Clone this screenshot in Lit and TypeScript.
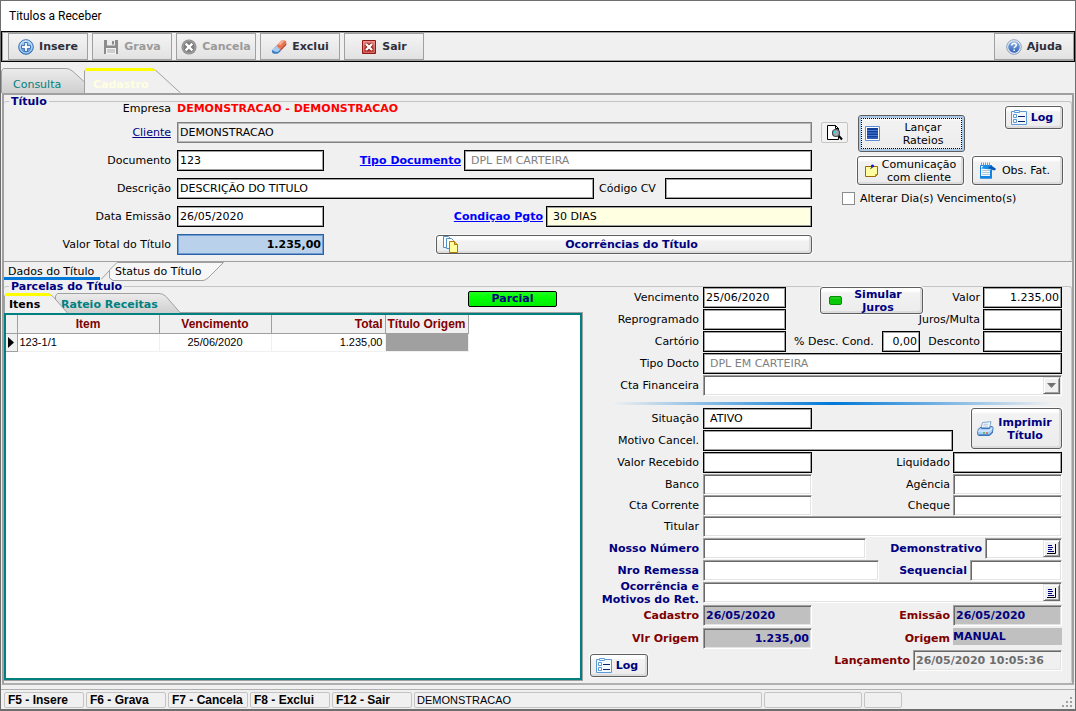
import { LitElement, html, css, svg, nothing, type TemplateResult } from "lit";
import { customElement } from "lit/decorators.js";

const icons: Record<string, TemplateResult> = {
  add: html`<svg width="16" height="16" viewBox="0 0 16 16">
    <defs><linearGradient id="ga" x2="0" y2="1"><stop stop-color="#b9dcf8" /><stop offset="1" stop-color="#3f83cf" /></linearGradient></defs>
    <circle cx="8" cy="8" r="7.3" fill="url(#ga)" stroke="#3c6eb0" /><circle cx="8" cy="8" r="6" fill="none" stroke="#d4eafc" stroke-width=".8" />
    <path d="M6.6 3.5h2.8v3.1h3.1v2.8H9.4v3.1H6.6V9.400H3.500V6.600H6.600z" fill="#fff" stroke="#2d66ae" stroke-width=".9" /></svg>`,
  save: html`<svg width="16" height="16" viewBox="0 0 16 16">
    <path d="M1 1h14v14H1z" fill="#8c8c8c" /><path d="M4 1h8v5.500H4z" fill="#ededed" /><path d="M9 2h2v3.500H9z" fill="#8c8c8c" />
    <path d="M3 9h10v6H3z" fill="#f4f4f4" /><path d="M4 11h8M4 13h8" stroke="#a8a8a8" /></svg>`,
  cancel: html`<svg width="16" height="16" viewBox="0 0 16 16">
    <circle cx="8" cy="8" r="7.500" fill="#858585" /><circle cx="8" cy="8" r="6.300" fill="none" stroke="#a9a9a9" />
    <path d="M4.700 4.700l6.600 6.600M11.300 4.700l-6.600 6.600" stroke="#6c6c6c" stroke-width="4" /><path d="M4.700 4.700l6.600 6.600M11.300 4.700l-6.600 6.600" stroke="#fff" stroke-width="2.400" /></svg>`,
  eraser: html`<svg width="16" height="16" viewBox="0 0 16 16">
    <path d="M10.500 1.500h3.200q2 .3 1.600 2.500L9 10.500 5.500 6.500z" fill="#e8734d" /><path d="M10.500 1.500h3.200L9.500 6.300 6.800 5.300z" fill="#f6b095" />
    <path d="M15.300 4v2L9.500 12l-.5-1.500z" fill="#b5432c" /><path d="M5 7l4.500 4v1.500l-3 2.300H3q-2.800-.6-1.800-3.500z" fill="#3d7dc4" /><path d="M5 7l4.300 3.500-2.600 2.500q-3.600 0-5.300-2z" fill="#a9cbee" /></svg>`,
  exit: html`<svg width="16" height="16" viewBox="0 0 16 16">
    <defs><linearGradient id="ge" x2="0" y2="1"><stop stop-color="#e58a84" /><stop offset="1" stop-color="#b3201c" /></linearGradient></defs>
    <path d="M1.500 1.500h13v13h-13z" fill="url(#ge)" stroke="#8f1814" /><path d="M2.700 2.700h10.600v10.600H2.700z" fill="none" stroke="#e9a19c" stroke-width=".7" />
    <path d="M5 5l6 6M11 5l-6 6" stroke="#8f1814" stroke-width="4" /><path d="M5 5l6 6M11 5l-6 6" stroke="#fff" stroke-width="2.400" /></svg>`,
  help: html`<svg width="16" height="16" viewBox="0 0 16 16">
    <defs><linearGradient id="gh" x2="0" y2="1"><stop stop-color="#8fb1e6" /><stop offset="1" stop-color="#2f62b8" /></linearGradient></defs>
    <circle cx="8" cy="8" r="7.300" fill="#e8eef8" stroke="#8d9dbb" /><circle cx="8" cy="8" r="5.800" fill="url(#gh)" />
    <path d="M5.800 6.500q0-2.300 2.300-2.300 2.200.1 2.200 1.900 0 1-1.200 1.700-.9.500-.9 1.500" fill="none" stroke="#fff" stroke-width="1.500" /><path d="M7.400 10.600h1.600V12H7.400z" fill="#fff" /></svg>`,
  log: html`<svg width="16" height="15" viewBox="0 0 16 15">
    <path d="M.5 14.500V1.500h3V.5h5v1h7v13z" fill="#f4f9ff" stroke="#5c9ad6" /><path d="M3.500 1.500v1h5v-1" fill="none" stroke="#5c9ad6" />
    <path d="M2.500 4.500h3v3h-3zM2.500 9.500h3v3h-3z" fill="#fff" stroke="#5c9ad6" /><path d="M7 6.500h7M7 11.500h7" stroke="#0a246a" /></svg>`,
  grid: html`<svg width="15" height="15" viewBox="0 0 15 15">
    <path d="M.5.500h14v14H.5z" fill="#fff" stroke="#5c8fd6" /><path d="M2 2h11v11H2z" fill="#123f9a" />
    <path d="M2 4.500h11M2 7h11M2 9.500h11M2 12h11" stroke="#4f86dc" stroke-width=".9" /></svg>`,
  note: html`<svg width="13" height="13" viewBox="0 0 13 13">
    <path d="M.5 2.500h12v8l-2 2H.500z" fill="#ffffa0" stroke="#9a6a00" /><path d="M12.500 10.500h-2v2z" fill="#d9a520" stroke="#9a6a00" stroke-width=".6" />
    <path d="M5.500 5L7.500 2.500" stroke="#333" /><circle cx="7.500" cy="2" r="1.600" fill="#1818d8" /></svg>`,
  pad: html`<svg width="17" height="17" viewBox="0 0 17 17">
    <path d="M1.500 3.500h11v12.500H1.500z" fill="#f6f9fc" stroke="#1184e4" /><path d="M3 8.500h8M3 10.500h8M3 12.500h8" stroke="#b4c6d8" />
    <path d="M1 14h12v2.500H1zM11 8h2v8h-2z" fill="#1184e4" />
    <path d="M2.500.5v3M4.500.5v3M6.500.5v3M8.500.5v3M10.500.5v3" stroke="#888" stroke-width=".9" />
    <path d="M2 6.500L5 3.500h7l5 3.500-2 1.500-3-1z" fill="#1b8ce8" /><path d="M12 3.500L17 7l-1.500 1.200L9 6z" fill="#0b57b4" /></svg>`,
  pages: html`<svg width="15" height="17" viewBox="0 0 15 17">
    <path d="M.5.500h5l2 2v9h-7z" fill="#fff" stroke="#4f8fc8" /><path d="M3.500 2.500h5l2 2v8h-7z" fill="#fff" stroke="#4f8fc8" />
    <path d="M6.500 5.500h5l3 3v8h-8z" fill="#ffff9c" stroke="#b07808" /><path d="M11.500 5.500v3h3" fill="#e8c040" stroke="#b07808" /></svg>`,
  search: html`<svg width="17" height="17" viewBox="0 0 17 17">
    <path d="M1.500 1.500h8l3 3v11h-11z" fill="#fff" stroke="#000" /><path d="M9.500 1.500v3h3" fill="none" stroke="#000" />
    <path d="M12 11l4 4.500" stroke="#000" stroke-width="2" /><circle cx="10" cy="9" r="3.500" fill="#9aa" stroke="#445" stroke-width="1.200" /><circle cx="9" cy="8" r="1.200" fill="#2fe0e0" /></svg>`,
  green: html`<svg width="13" height="11" viewBox="0 0 13 11">
    <rect x=".5" y="1.500" width="12" height="8" rx="1.500" fill="#08c808" stroke="#0a8a0a" /><path d="M2 3h9" stroke="#3fdf3f" stroke-width=".8" /></svg>`,
  print: html`<svg width="17" height="16" viewBox="0 0 17 16">
    <path d="M5.500 1.500l8.500-.8-1.500 6H4z" fill="#fff" stroke="#7da3cf" /><path d="M6.500 3.200h5M6 5h5" stroke="#8db2dc" stroke-width=".8" />
    <path d="M3 6.500h1.500v1h8l.8-2h1.700q1.200.3 1 1.500l-.6 5-3 2.500H1.500Q.500 14 .7 12L1.200 8.500z" fill="#a9d0f5" stroke="#3d74b4" />
    <path d="M1 10h11l3.500-3" fill="none" stroke="#eaf5ff" /><path d="M1.500 13.800h10.500l3-2.500" fill="none" stroke="#3f78bd" /><path d="M6 12h2" stroke="#1a1" stroke-width="1.200" /><path d="M9 12h2" stroke="#e22" stroke-width="1.200" /></svg>`,
  memo: html`<svg width="9" height="10" viewBox="0 0 9 10">
    <path d="M0 9.500h8.500V0" fill="none" stroke="#000" /><path d="M1 1.500h4M1 3.500h5M1 5.500h4M1 7.500h6" stroke="#000080" /></svg>`,
  arrow: html`<svg width="9" height="5" viewBox="0 0 9 5"><path d="M0 0h9L4.500 5z" fill="#707070" /></svg>`,
};

/** Outline and fill of a slanted page tab. */
const tabShape = (w: number, h: number, slant: number, fill: string, cap: boolean, flip = false) => html`
  <svg class="shape" width=${w} height=${h} viewBox="0 0 ${w} ${h}">
    <defs><linearGradient id="tg" x2="0" y2="1"><stop stop-color="#ececec" /><stop offset="1" stop-color="#cfcfcf" /></linearGradient></defs>
    ${flip
      ? svg`<path d="M.5 ${h - 3}V8L8 .5H${w - 0.5}L${w - slant + 2} ${h - 3}q-3 2.500-5 2.500H4z" fill=${fill} stroke="#a0a0a0" />`
      : svg`<path d="M.5 ${h}V3l2-2.500H${w - slant - 6}q4 0 7 3L${w - 0.5} ${h}" fill=${fill} stroke="#a0a0a0" />`}
    ${cap ? svg`<path d="M1 0H${w - slant - 5}q3 0 5 3H1z" fill="#ff0" />` : nothing}
  </svg>`;

const field = (id: string, cls: string, value = "", label?: string) =>
  html`<input id=${id} class="in ${cls}" type="text" .value=${value} aria-label=${label ?? nothing} />`;

const pair = (label: string, id: string, cls: string, value = "", labelCls = "") =>
  html`<label class=${labelCls} for=${id}>${label}</label>${field(id, cls, value)}`;

@customElement("app-root")
export class AppRoot extends LitElement {
  static styles = css`
    :host {
      display: block;
      font: 11px/13px "DejaVu Sans", Verdana, sans-serif;
      color: #000;
    }
    * { box-sizing: border-box; }
    button, input, select { font: inherit; color: inherit; margin: 0; min-width: 0; }
    label, a, button, legend { white-space: nowrap; }
    svg { flex: none; display: block; }
    .window {
      display: flex; flex-direction: column; min-height: 100vh;
      background: #f0f0f0; border: 1px solid #6e6e6e; border-bottom: 2px solid #6e6e6e;
    }
    .title {
      margin: 0; padding: 0 8px; background: #fff;
      font: 12px/30px Roboto, "Open Sans", sans-serif;
    }
    .toolbar {
      display: flex; gap: 4px; height: 31px; padding: 1px 0 1px 6px;
      border: 1px solid #000; box-shadow: inset 0 0 0 1px #a0a0a0;
    }
    .tool {
      display: flex; align-items: center; justify-content: center; gap: 5px;
      width: 80px; padding: 0; border: 1px solid #a0a0a0;
      background: linear-gradient(#f4f4f4, #e2e2e2); color: #2f2f3a; font-weight: bold;
    }
    .tool:disabled { color: #9a9a9a; }
    .tool.end { margin-left: auto; }

    .tabs { display: flex; }
    .tab {
      position: relative; z-index: 0; padding: 0; border: 0; background: none; text-align: left;
    }
    .shape { position: absolute; left: 0; top: 0; z-index: -1; }
    .main-tabs { padding-top: 6px; }
    .main-tabs .tab { height: 25px; padding: 8px 0 0 12px; color: #008080; }
    .main-tabs .first { width: 83px; }
    .main-tabs .second { width: 97px; padding-left: 9px; color: #ffffe1; font-weight: bold; }

    .page {
      display: flex; flex-direction: column; flex: 1; margin: 0 1px 4px;
      border: 2px solid #a0a0a0; border-bottom-color: #b0b0b0;
    }
    fieldset {
      min-width: 0; margin: 0; padding: 0; border: 1px solid #c4c4c4;
      border-width: 1px 1px 0 0; border-radius: 3px;
    }
    legend { margin-left: 5px; padding: 0 2px; color: #000080; font-weight: bold; line-height: 13px; }

    .header { display: flex; margin-top: -7px; padding-bottom: 6px; }
    .rows { display: flex; flex-direction: column; flex: 1; gap: 7px; }
    .row { display: flex; align-items: center; height: 21px; }
    .row.text { height: 14px; }
    .cap { width: 167px; margin-right: 6px; text-align: right; }
    .company { color: #f00; font-weight: bold; }
    a { color: #00f; font-weight: bold; }
    a.plain { color: #000080; font-weight: normal; }
    .spread { justify-content: space-between; }
    .start { display: flex; align-items: center; }
    .code { width: 61px; margin: 0 5px; }
    .cond { display: flex; align-items: center; gap: 3px; }

    .in { height: 21px; padding: 0 2px; border: 1px solid #000; border-radius: 0; background: #fff; outline: none; }
    .flat { box-shadow: inset 0 0 0 1px #a0a0a0; }
    .sunk, .combo {
      border-color: #a0a0a0 #fff #fff #a0a0a0; box-shadow: inset 1px 1px #696969, inset -1px -1px #e3e3e3;
    }
    .grow { flex: 1; }
    .read { background: #f0f0f0; border-color: #808080; box-shadow: inset 0 0 0 1px #b8b8b8; }
    .muted { color: #808080; padding-left: 6px; }
    .pad { padding-left: 6px; }
    .num { text-align: right; }
    .yellow { background: #ffffe1; padding-left: 6px; }
    .total { background: #b9d1ea; border-color: #2a62a8; box-shadow: inset 0 0 0 1px #6f9bd0; font-weight: bold; }
    .w147 { width: 147px; } .w266 { width: 266px; } .w348 { width: 348px; } .w376 { width: 376px; }
    .w83 { width: 83px; } .w79 { width: 79px; } .w38 { width: 38px; } .w109 { width: 109px; }
    .w163 { width: 163px; } .w176 { width: 176px; } .w92 { width: 92px; } .w77 { width: 77px; } .w149 { width: 149px; }
    .gray { background: #c0c0c0; color: #000080; font-weight: bold; }
    .none { border: 0; height: 17px; padding: 0; }
    .off { background: #f0f0f0; color: #6d6d6d; font-weight: bold; }

    .btn {
      display: flex; align-items: center; padding: 0 6px; border: 1px solid #5e5e5e; border-radius: 3px;
      background: linear-gradient(#fff 0, #fff 3px, #f2f2f2 5px, #ececec);
      box-shadow: inset -2px -2px #dcdcdc, 0 0 0 1px #fafafa;
    }
    .btn span { flex: 1; text-align: center; white-space: normal; }
    .navy { color: #000080; font-weight: bold; }
    .log { width: 58px; height: 23px; padding: 0 5px; }

    .aside { width: 259px; padding: 5px 8px 0 9px; }
    .aside-top { display: flex; align-items: flex-start; height: 50px; }
    .find {
      display: flex; align-items: center; justify-content: center; width: 27px; height: 21px; margin: 16px 10px 0 0;
      padding: 0; border: 1px solid #c4c4c4; border-radius: 2px; background: #f2f2f2;
    }
    .launch { width: 107px; height: 37px; margin-top: 9px; outline: 1px dotted #000; outline-offset: -4px; box-shadow: inset 0 0 0 2px #a9cbe9; }
    .launch span { padding-left: 8px; }
    .aside .log { margin-left: auto; }
    .aside-mid { display: flex; justify-content: flex-end; gap: 8px; }
    .aside-mid .btn { height: 29px; }
    .comm { width: 107px; padding: 0 3px 0 7px; }
    .obs { width: 91px; }
    .check { display: flex; align-items: center; gap: 5px; margin: 6px 0 0 21px; height: 14px; }
    .check input { appearance: none; width: 13px; height: 13px; border: 1px solid #8c8c8c; background: #fff; }

    .sub-tabs { height: 19px; border-top: 1px solid #a0a0a0; }
    .sub-tabs .tab { height: 18px; padding-left: 4px; }
    .sub-tabs .on { width: 105px; background: linear-gradient(#0078d7, #0078d7) 0 100% / 96px 3px no-repeat; }
    .sub-tabs .on .slant { position: absolute; right: 0; bottom: 0; }
    .sub-tabs .other { width: 115px; padding-left: 6px; }

    .installments { display: flex; flex-direction: column; flex: 1; }
    .body { display: flex; flex: 1; margin-top: -7px; min-height: 397px; }
    .left { display: flex; flex-direction: column; flex: 1; padding: 5px 0 3px; }
    .left-head { display: flex; justify-content: space-between; align-items: flex-start; padding-right: 26px; height: 22px; }
    .list-tabs { padding-top: 2px; }
    .list-tabs .tab { height: 20px; padding: 3px 0 0 5px; font-weight: bold; }
    .list-tabs .on { width: 51px; z-index: 1; }
    .list-tabs .other { width: 126px; padding-left: 6px; color: #008080; }
    .status {
      width: 89px; height: 16px; padding: 0; border: 1px solid #000; border-radius: 2px;
      background: linear-gradient(#2f2, #0f0 40%, #0e0); color: #000080; font-weight: bold; line-height: 14px;
    }
    .box { flex: 1; border: 2px solid #008080; outline: 1px solid #a0a0a0; outline-offset: 0; background: #fff; margin-right: 1px; }
    table { border-collapse: collapse; table-layout: fixed; width: 462px; font: 12px/15px "Liberation Sans", Arial, sans-serif; }
    th { height: 18px; padding: 1px 2px 0; background: #f0f0f0; border: 1px solid #a0a0a0; border-width: 0 1px 1px 0; color: #800000; white-space: nowrap; }
    td { height: 18px; padding: 0 2px; border: 1px solid #f0f0f0; border-width: 0 1px 1px 0; font-size: 11px; }
    .ind { background: #f0f0f0; border-color: #a0a0a0; padding: 0 0 0 2px; }
    .c { text-align: center; } .r { text-align: right; }
    .fill { background: #a0a0a0; }

    .form { width: 488px; padding: 1px 9px 0 3px; }
    .group { display: flex; flex-direction: column; gap: 1px; }
    .tight { gap: 0; margin: 1px 0; }
    .loose { gap: 2px; margin-top: 2px; }
    .form .cap { width: 113px; margin-right: 4px; }
    .form .row { align-items: flex-start; }
    .form label { line-height: 21px; }
    .form .two { line-height: 13px; margin-top: -2px; }
    .right { display: flex; margin-left: auto; gap: 3px; }
    .maroon { color: #800000; font-weight: bold; }
    .simulate { width: 103px; height: 27px; margin-left: auto; padding: 0 8px; }
    .value { display: flex; gap: 3px; width: 139px; justify-content: flex-end; }
    .disc { display: flex; gap: 4px; margin-left: 8px; }
    .disc label { width: 84px; }
    .combo { position: relative; display: flex; flex: 1; height: 21px; border-style: solid; border-width: 1px; background: #fff; }
    .right .combo { flex: none; }
    .combo select, .combo input { flex: 1; width: 100%; border: 0; background: none; appearance: none; padding: 0 3px; outline: none; }
    .drop {
      display: flex; align-items: center; justify-content: center; flex: none; width: 17px; padding: 0;
      border: 1px solid; border-color: #e3e3e3 #696969 #696969 #e3e3e3; background: #f0f0f0; box-shadow: inset 1px 1px #fff, inset -1px -1px #a0a0a0;
      pointer-events: none; margin: 1px;
    }
    .rule { height: 3px; margin: 6px 10px 3px 26px; border: 0; background: linear-gradient(90deg, #f0f0f0, #0078d7 50%, #f0f0f0); }
    .split { display: flex; gap: 18px; }
    .split .group { flex: 1; }
    .print { width: 91px; height: 41px; padding: 0 5px; }
    .foot { display: flex; align-items: flex-start; margin-top: -1px; }
    .foot .log { margin: 4px 0 0 4px; }

    .statusbar { display: flex; gap: 2px; height: 20px; padding: 2px 2px 1px 3px; border-top: 1px solid #b0b0b0; font: bold 12px/15px "Liberation Sans", Arial, sans-serif; }
    .cell { width: 80px; padding: 0 3px; border: 1px solid #c4c4c4; border-radius: 2px; white-space: nowrap; }
    .cell.user { flex: 1; padding: 0 2px; font-size: 11px; font-weight: normal; }
    .cell.b { width: 98px; } .cell.s { width: 38px; }
    .grip { width: 169px; display: flex; justify-content: flex-end; align-items: flex-end; }
  `;

  private tool(icon: string, text: string, cls = "", disabled = false) {
    return html`<button class="tool ${cls}" ?disabled=${disabled}>${icons[icon]}${text}</button>`;
  }

  private renderHeader() {
    return html`<fieldset>
      <legend>Título</legend>
      <div class="header">
        <div class="rows">
          <div class="row text"><span class="cap">Empresa</span><span class="company">DEMONSTRACAO - DEMONSTRACAO</span></div>
          <div class="row">
            <span class="cap"><a class="plain" href="#cliente">Cliente</a></span>${field("cliente", "read grow", "DEMONSTRACAO", "Cliente")}
          </div>
          <div class="row spread">
            <div class="start">${pair("Documento", "doc", "flat w147", "123", "cap")}</div>
            <div class="cond"><a href="#tipo">Tipo Documento</a>${field("tipo", "flat muted w348", "DPL EM CARTEIRA", "Tipo Documento")}</div>
          </div>
          <div class="row">
            ${pair("Descrição", "desc", "flat grow", "DESCRIÇÃO DO TITULO", "cap")} ${pair("Código CV", "cv", "flat w147", "", "code")}
          </div>
          <div class="row spread">
            <div class="start">${pair("Data Emissão", "data", "flat w147", "26/05/2020", "cap")}</div>
            <div class="cond"><a href="#cond">Condiçao Pgto</a>${field("cond", "flat yellow w266", "30 DIAS", "Condiçao Pgto")}</div>
          </div>
          <div class="row spread">
            <div class="start">${pair("Valor Total do Título", "total", "total num w147", "1.235,00", "cap")}</div>
            <button class="btn navy w376">${icons.pages}<span>Ocorrências do Título</span></button>
          </div>
        </div>
        <div class="aside">
          <div class="aside-top">
            <button class="find" aria-label="Pesquisar">${icons.search}</button>
            <button class="btn launch">${icons.grid}<span>Lançar<br />Rateios</span></button>
            <button class="btn navy log">${icons.log}<span>Log</span></button>
          </div>
          <div class="aside-mid">
            <button class="btn comm">${icons.note}<span>Comunicação<br />com cliente</span></button>
            <button class="btn obs">${icons.pad}<span>Obs. Fat.</span></button>
          </div>
          <label class="check"><input type="checkbox" />Alterar Dia(s) Vencimento(s)</label>
        </div>
      </div>
    </fieldset>`;
  }

  private renderList() {
    return html`<div class="left">
      <div class="left-head">
        <div class="tabs list-tabs">
          <button class="tab on">${tabShape(64, 20, 16, "#f0f0f0", true)}Itens</button>
          <button class="tab other">${tabShape(126, 20, 16, "url(#tg)", false)}Rateio Receitas</button>
        </div>
        <button class="status">Parcial</button>
      </div>
      <div class="box">
        <table>
          <colgroup><col width="11" /><col width="142" /><col width="112" /><col width="114" /><col width="83" /></colgroup>
          <thead><tr><th></th><th>Item</th><th>Vencimento</th><th class="r">Total</th><th>Título Origem</th></tr></thead>
          <tbody><tr>
            <td class="ind"><svg width="6" height="11" viewBox="0 0 6 11"><path d="M0 0v11l6-5.500z" /></svg></td>
            <td>123-1/1</td><td class="c">25/06/2020</td><td class="r">1.235,00</td><td class="fill"></td>
          </tr></tbody>
        </table>
      </div>
    </div>`;
  }

  private renderForm() {
    return html`<div class="form">
      <div class="group">
        <div class="row">
          ${pair("Vencimento", "venc", "flat w83", "25/06/2020", "cap")}
          <button class="btn navy simulate">${icons.green}<span>Simular Juros</span></button>
          <div class="value">${pair("Valor", "valor", "flat num w79", "1.235,00")}</div>
        </div>
        <div class="row">
          ${pair("Reprogramado", "repr", "flat w83", "", "cap")}
          <div class="right">${pair("Juros/Multa", "juros", "flat num w79")}</div>
        </div>
        <div class="row">
          ${pair("Cartório", "cart", "flat w83", "", "cap")}
          <div class="disc">${pair("% Desc. Cond.", "dcond", "flat num w38", "0,00")}</div>
          <div class="right">${pair("Desconto", "descto", "flat num w79")}</div>
        </div>
        <div class="row">${pair("Tipo Docto", "tdoc", "flat muted grow", "DPL EM CARTEIRA", "cap")}</div>
        <div class="row">
          <label class="cap" for="cta">Cta Financeira</label>
          <div class="combo"><select id="cta"><option></option></select><span class="drop">${icons.arrow}</span></div>
        </div>
      </div>
      <hr class="rule" />
      <div class="group">
        <div class="split">
          <div class="group">
            <div class="row">${pair("Situação", "sit", "flat pad w109", "ATIVO", "cap")}</div>
            <div class="row">${pair("Motivo Cancel.", "mot", "flat grow", "", "cap")}</div>
          </div>
          <button class="btn navy print">${icons.print}<span>Imprimir Título</span></button>
        </div>
        <div class="row">
          ${pair("Valor Recebido", "vrec", "flat w109", "", "cap")}
          <div class="right">${pair("Liquidado", "liq", "flat w109")}</div>
        </div>
      </div>
      <div class="group tight">
        <div class="row">
          ${pair("Banco", "banco", "sunk w109", "", "cap")}
          <div class="right">${pair("Agência", "ag", "sunk w109")}</div>
        </div>
        <div class="row">
          ${pair("Cta Corrente", "cc", "sunk w109", "", "cap")}
          <div class="right">${pair("Cheque", "chq", "sunk w109")}</div>
        </div>
        <div class="row">${pair("Titular", "tit", "sunk grow", "", "cap")}</div>
      </div>
      <div class="group">
        <div class="row">
          ${pair("Nosso Número", "nosso", "sunk w163", "", "cap navy")}
          <div class="right">
            <label class="navy" for="demo">Demonstrativo</label>
            <div class="combo w77"><input id="demo" type="text" /><span class="drop">${icons.memo}</span></div>
          </div>
        </div>
        <div class="row">
          ${pair("Nro Remessa", "nro", "sunk w176", "", "cap navy")}
          <div class="right">${pair("Sequencial", "seq", "sunk w92", "", "navy")}</div>
        </div>
        <div class="row">
          <label class="cap navy two" for="oco">Ocorrência e<br />Motivos do Ret.</label>
          <div class="combo"><input id="oco" type="text" /><span class="drop">${icons.memo}</span></div>
        </div>
      </div>
      <div class="group loose">
        <div class="row">
          ${pair("Cadastro", "cad", "sunk gray w109", "26/05/2020", "cap maroon")}
          <div class="right">${pair("Emissão", "emi", "sunk gray w109", "26/05/2020", "maroon")}</div>
        </div>
        <div class="row">
          ${pair("Vlr Origem", "vori", "sunk gray num w109", "1.235,00", "cap maroon")}
          <div class="right">${pair("Origem", "ori", "gray none w109", "MANUAL", "maroon")}</div>
        </div>
        <div class="foot">
          <button class="btn navy log">${icons.log}<span>Log</span></button>
          <div class="right">${pair("Lançamento", "lan", "sunk off w149", "26/05/2020 10:05:36", "maroon")}</div>
        </div>
      </div>
    </div>`;
  }

  render() {
    const keys = ["F5 - Insere", "F6 - Grava", "F7 - Cancela", "F8 - Exclui", "F12 - Sair"];
    return html`<div class="window">
      <h1 class="title">Titulos a Receber</h1>
      <div class="toolbar">
        ${this.tool("add", "Insere")} ${this.tool("save", "Grava", "", true)} ${this.tool("cancel", "Cancela", "", true)}
        ${this.tool("eraser", "Exclui")} ${this.tool("exit", "Sair")} ${this.tool("help", "Ajuda", "end")}
      </div>
      <div class="tabs main-tabs">
        <button class="tab first">${tabShape(96, 25, 25, "url(#tg)", false)}Consulta</button>
        <button class="tab second">${tabShape(97, 25, 25, "#f0f0f0", true)}Cadastro</button>
      </div>
      <div class="page">
        ${this.renderHeader()}
        <div class="tabs sub-tabs">
          <button class="tab on">Dados do Título
            <svg class="slant" width="8" height="11" viewBox="0 0 8 11"><path d="M0 10.500L8 2" fill="none" stroke="#a0a0a0" /></svg>
          </button>
          <button class="tab other">${tabShape(115, 19, 18, "#f7f7f7", false, true)}Status do Título</button>
        </div>
        <fieldset class="installments">
          <legend>Parcelas do Título</legend>
          <div class="body">${this.renderList()}${this.renderForm()}</div>
        </fieldset>
      </div>
      <div class="statusbar">
        ${keys.map((k) => html`<span class="cell">${k}</span>`)}
        <span class="cell user">DEMONSTRACAO</span><span class="cell b"></span><span class="cell s"></span>
        <span class="grip"><svg width="11" height="11" viewBox="0 0 11 11">
          <path d="M8 0h2v2H8zM8 4h2v2H8zM8 8h2v2H8zM4 4h2v2H4zM4 8h2v2H4zM0 8h2v2H0z" fill="#a0a0a0" /></svg></span>
      </div>
    </div>`;
  }
}
